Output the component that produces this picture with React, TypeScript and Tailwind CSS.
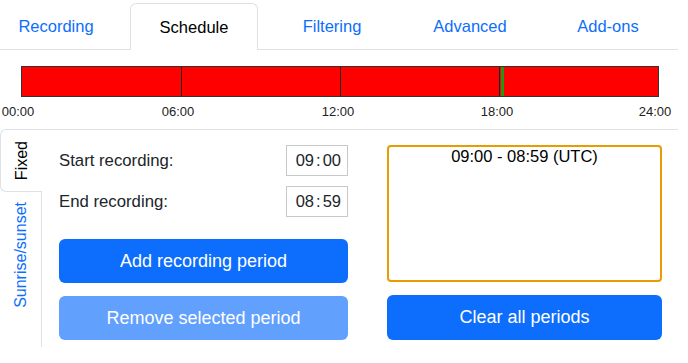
import React from "react";

const tabs = ["Recording", "Schedule", "Filtering", "Advanced", "Add-ons"];

const ticks = [159, 318, 477];
const labels = [
  { text: "00:00", x: 18 },
  { text: "06:00", x: 178 },
  { text: "12:00", x: 338 },
  { text: "18:00", x: 497 },
  { text: "24:00", x: 655 },
];

function TimeInput({ h, m }: { h: string; m: string }) {
  return (
    <div className="flex h-[31px] w-[62px] items-center justify-end border border-[#c9c9c9] pr-[6px] text-[16.5px] text-[#212529]">
      <span>{h}</span>
      <span className="mx-[2px]">:</span>
      <span>{m}</span>
    </div>
  );
}

export default function App() {
  return (
    <div className="h-[363px] w-[688px] overflow-hidden bg-white font-['Liberation_Sans',Arial,sans-serif] text-[#212529]">
      <div className="w-[678px]">
        {/* Top tabs */}
        <div className="border-b border-[#dee2e6] pt-[3px]">
          <div className="-ml-[13px] flex">
            {tabs.map((t) => (
              <div key={t} className="flex w-[138px] flex-none justify-center">
                {t === "Schedule" ? (
                  <div className="-mb-px flex h-[47px] w-[128px] items-center justify-center rounded-t-[6px] border border-b-0 border-[#dee2e6] bg-white text-[16.5px] text-[#000]">
                    {t}
                  </div>
                ) : (
                  <div className="flex h-[46px] w-[128px] items-center justify-center text-[16.5px] text-[#0d6efd]">
                    {t}
                  </div>
                )}
              </div>
            ))}
          </div>
        </div>

        {/* Timeline */}
        <div className="pt-[16px]">
          <div className="relative ml-[21px] h-[31px] w-[638px] border border-[#333] bg-[#ff0000]">
            {ticks.map((x) => (
              <div key={x} className="absolute top-0 h-full w-px bg-[#222]" style={{ left: x }} />
            ))}
            <div className="absolute top-0 h-full w-[3px] bg-[#1a9a1a]" style={{ left: 479 }} />
          </div>
          <div className="relative mt-[7px] h-[15px] text-[13px] leading-[15px] text-[#222]">
            {labels.map((l) => (
              <span key={l.text} className="absolute top-0 -translate-x-1/2" style={{ left: l.x }}>
                {l.text}
              </span>
            ))}
          </div>
        </div>

        {/* Schedule panel */}
        <div className="mt-[10px] flex">
          <div className="flex w-[42px] flex-none flex-col">
            <div className="flex h-[63px] items-center justify-center rounded-l-[6px] border border-r-0 border-[#dee2e6] bg-white">
              <span className="rotate-180 text-[16px] text-[#000] [writing-mode:vertical-rl]">Fixed</span>
            </div>
            <div className="flex h-[126px] items-center justify-center border-r border-[#dee2e6]">
              <span className="rotate-180 text-[16px] text-[#0d6efd] [writing-mode:vertical-rl]">Sunrise/sunset</span>
            </div>
            <div className="h-[29px] border-r border-[#dee2e6]" />
          </div>

          <div className="flex flex-1 gap-[39px] border-t border-[#dee2e6] pl-[17px] pr-[16px] pt-[15px]">
            <div className="flex w-[289px] flex-col">
              <div className="flex items-center justify-between">
                <span className="text-[16.75px]">Start recording:</span>
                <TimeInput h="09" m="00" />
              </div>
              <div className="mt-[10px] flex items-center justify-between">
                <span className="text-[16.75px]">End recording:</span>
                <TimeInput h="08" m="59" />
              </div>
              <button className="mt-[22px] h-[44px] rounded-[6px] bg-[#0d6efd] text-[18px] text-white">
                Add recording period
              </button>
              <button className="mt-[13px] h-[44px] rounded-[6px] bg-[#0d6efd] text-[18px] text-white opacity-65">
                Remove selected period
              </button>
            </div>

            <div className="flex flex-1 flex-col">
              <div className="h-[137px] rounded-[4px] border-2 border-[#e89c00] text-center text-[16.5px] leading-[18px] text-[#000]">
                09:00 - 08:59 (UTC)
              </div>
              <button className="mt-[13px] h-[45px] rounded-[6px] bg-[#0d6efd] text-[18px] text-white">
                Clear all periods
              </button>
            </div>
          </div>
        </div>
      </div>
    </div>
  );
}
